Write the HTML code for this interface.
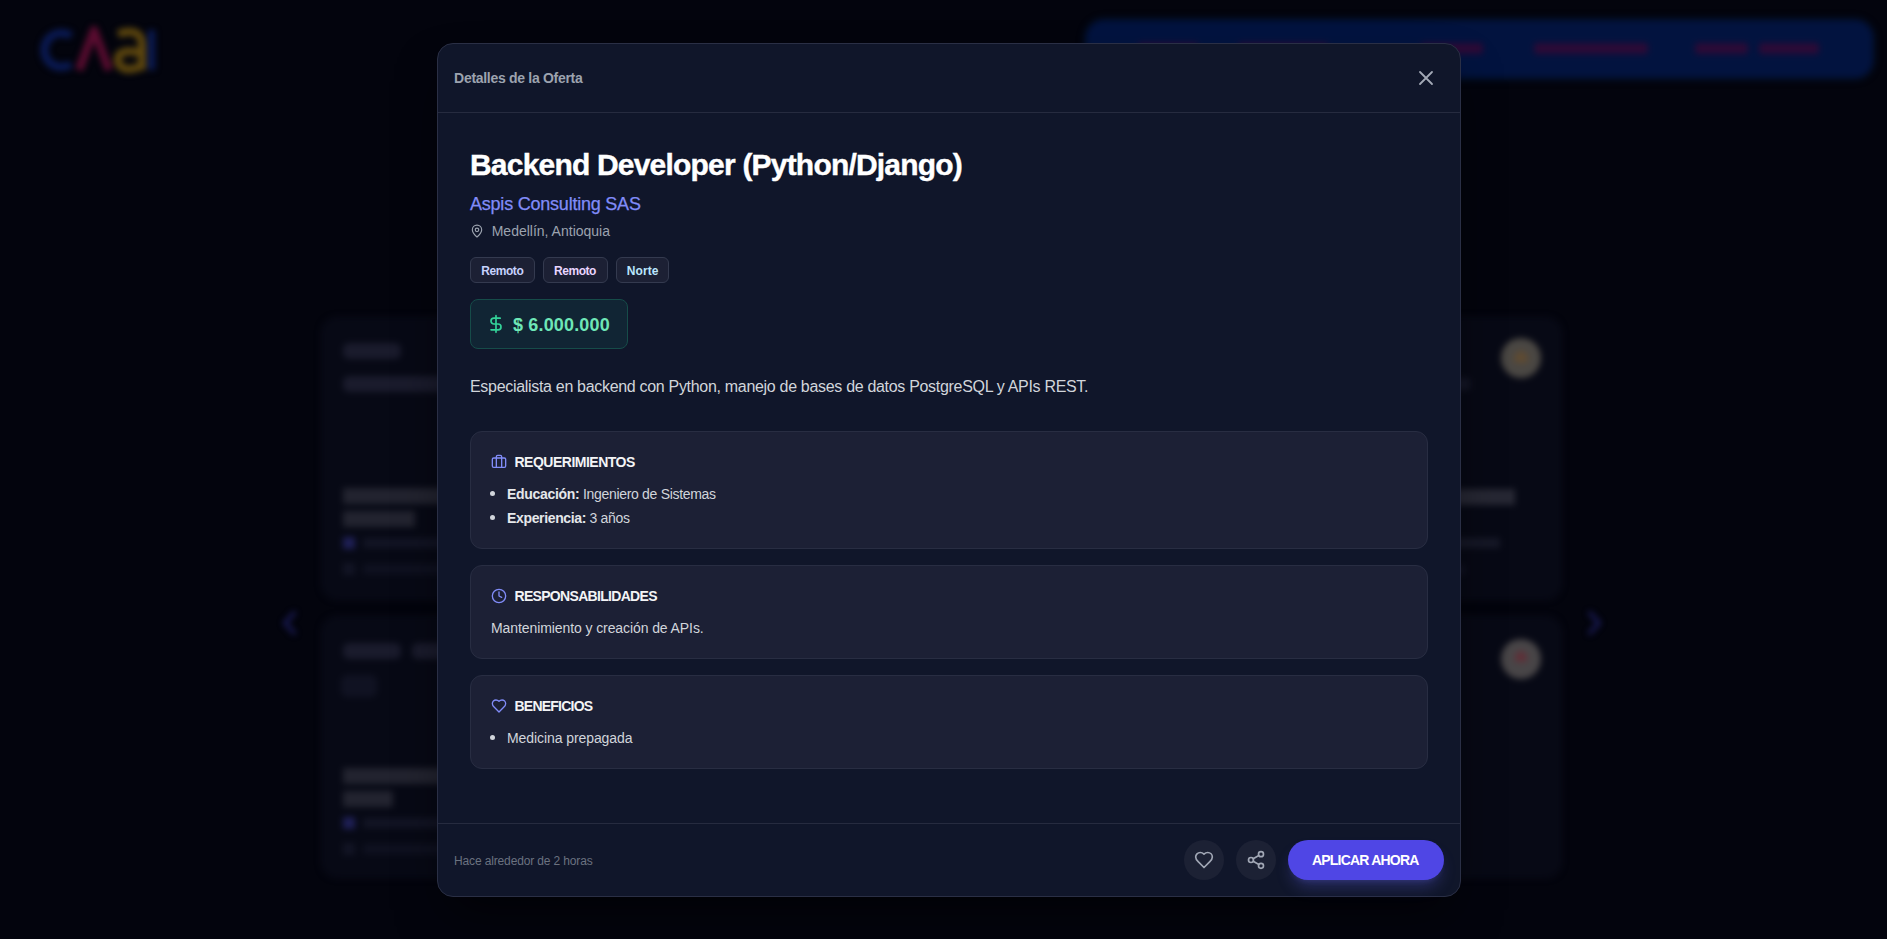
<!DOCTYPE html>
<html lang="es">
<head>
<meta charset="utf-8">
<title>Detalles de la Oferta</title>
<style>
*{margin:0;padding:0;box-sizing:border-box}
html,body{width:1887px;height:939px;overflow:hidden}
body{background:#03040d;font-family:"Liberation Sans",sans-serif;position:relative}
.a{position:absolute}
.t{position:absolute;white-space:nowrap;line-height:1}
.b{font-weight:bold}
#bg{position:absolute;left:0;top:0;width:1887px;height:939px;overflow:hidden}
#modal{position:absolute;left:437px;top:43px;width:1024px;height:854px;background:#10162a;border:1px solid #2a2f45;border-radius:16px;box-shadow:0 25px 50px -12px rgba(0,0,0,.6)}
.hr{position:absolute;height:1px;background:#262b3f}
.tag{position:absolute;top:257px;height:26px;border:1px solid #343a4f;background:#1c2034;border-radius:6px}
.card{position:absolute;left:470px;width:958px;background:#1c2035;border:1px solid #282d42;border-radius:12px}
.dot{position:absolute;width:5px;height:5px;border-radius:50%;background:#d1d5db}
.ic{position:absolute;fill:none;stroke-linecap:round;stroke-linejoin:round}
.circ{position:absolute;top:840px;width:40px;height:40px;border-radius:50%;background:#1c2134}
</style>
</head>
<body>
<div id="bg">
 <div class="a" style="left:0;top:0;width:1887px;height:939px;filter:blur(3px)">
  <!-- logo -->
  <svg class="a" style="left:30px;top:20px" width="140" height="62" viewBox="0 0 140 62">
   <path d="M41 16 A17 17 0 1 0 41 44" fill="none" stroke="#0a1a55" stroke-width="8" stroke-linecap="butt"/>
   <path d="M49 50 L64 10 L79 50" fill="none" stroke="#5a0c30" stroke-width="8" stroke-linejoin="round"/>
   <path d="M88 14 Q112 6 112 26 L112 50 M112 33 Q86 27 88 42 Q92 54 112 46" fill="none" stroke="#5e470e" stroke-width="8"/>
   <rect x="118" y="10" width="7" height="40" fill="#0a1a55"/>
  </svg>
  <!-- nav pill -->
  <div class="a" style="left:1086px;top:20px;width:787px;height:58px;border-radius:18px;background:#02133f;box-shadow:0 0 6px rgba(0,60,120,.35)"></div>
  <div class="a" style="left:1138px;top:43px;width:60px;height:12px;background:#2c0a36;height:11px;border-radius:3px"></div>
  <div class="a" style="left:1238px;top:43px;width:90px;height:12px;background:#2c0a36;height:11px;border-radius:3px"></div>
  <div class="a" style="left:1421px;top:43px;width:62px;height:12px;background:#2c0a36;height:11px;border-radius:3px"></div>
  <div class="a" style="left:1534px;top:43px;width:114px;height:12px;background:#2c0a36;height:11px;border-radius:3px"></div>
  <div class="a" style="left:1695px;top:43px;width:53px;height:12px;background:#2c0a36;height:11px;border-radius:3px"></div>
  <div class="a" style="left:1759px;top:43px;width:60px;height:12px;background:#2c0a36;height:11px;border-radius:3px"></div>
  <!-- cards left -->
  <div class="a" style="left:321px;top:317px;width:400px;height:283px;border-radius:16px;background:#070915;border:1px solid #0b0d1b"></div>
  <div class="a" style="left:343px;top:343px;width:58px;height:16px;border-radius:6px;background:#1a1b2c"></div>
  <div class="a" style="left:343px;top:376px;width:120px;height:16px;border-radius:6px;background:#1a1b2c"></div>
  <div class="a" style="left:343px;top:488px;width:120px;height:16px;background:#22232f"></div>
  <div class="a" style="left:343px;top:511px;width:72px;height:16px;background:#22232f"></div>
  <div class="a" style="left:343px;top:537px;width:12px;height:12px;background:#1e1f55"></div>
  <div class="a" style="left:363px;top:538px;width:90px;height:10px;background:#121424"></div>
  <div class="a" style="left:343px;top:563px;width:12px;height:12px;background:#121424"></div>
  <div class="a" style="left:363px;top:564px;width:90px;height:10px;background:#0f1120"></div>
  <div class="a" style="left:321px;top:616px;width:400px;height:262px;border-radius:16px;background:#070915;border:1px solid #0b0d1b"></div>
  <div class="a" style="left:343px;top:643px;width:58px;height:16px;border-radius:6px;background:#1a1b2c"></div>
  <div class="a" style="left:412px;top:643px;width:58px;height:16px;border-radius:6px;background:#1a1b2c"></div>
  <div class="a" style="left:341px;top:675px;width:36px;height:22px;border-radius:6px;background:#101222"></div>
  <div class="a" style="left:343px;top:768px;width:120px;height:16px;background:#22232f"></div>
  <div class="a" style="left:343px;top:791px;width:50px;height:16px;background:#22232f"></div>
  <div class="a" style="left:343px;top:817px;width:12px;height:12px;background:#1e1f55"></div>
  <div class="a" style="left:363px;top:818px;width:90px;height:10px;background:#121424"></div>
  <div class="a" style="left:343px;top:843px;width:12px;height:12px;background:#121424"></div>
  <div class="a" style="left:363px;top:844px;width:90px;height:10px;background:#0f1120"></div>
  <!-- cards right -->
  <div class="a" style="left:1160px;top:317px;width:402px;height:283px;border-radius:16px;background:#070915;border:1px solid #0b0d1b"></div>
  <div class="a" style="left:1501px;top:338px;width:40px;height:40px;border-radius:50%;background:#4a4743"></div>
  <div class="a" style="left:1514px;top:351px;width:14px;height:12px;border-radius:7px 7px 2px 2px;background:#5e4a32"></div>
  <div class="a" style="left:1440px;top:378px;width:30px;height:12px;background:#141626"></div>
  <div class="a" style="left:1440px;top:489px;width:75px;height:16px;background:#262733"></div>
  <div class="a" style="left:1440px;top:538px;width:60px;height:10px;background:#161827"></div>
  <div class="a" style="left:1440px;top:565px;width:25px;height:10px;background:#101222"></div>
  <div class="a" style="left:1160px;top:616px;width:402px;height:262px;border-radius:16px;background:#070915;border:1px solid #0b0d1b"></div>
  <div class="a" style="left:1501px;top:639px;width:40px;height:40px;border-radius:50%;background:#484547"></div>
  <div class="a" style="left:1515px;top:651px;width:12px;height:11px;border-radius:6px 6px 2px 2px;background:#5e3038"></div>
  <!-- arrows -->
  <svg class="a" style="left:280px;top:610px" width="20" height="26" viewBox="0 0 20 26"><path d="M15 2 5 13l10 11" fill="none" stroke="#1f2068" stroke-width="3.2"/></svg>
  <svg class="a" style="left:1584px;top:610px" width="20" height="26" viewBox="0 0 20 26"><path d="M5 2l10 11-10 11" fill="none" stroke="#1f2068" stroke-width="3.2"/></svg>
 </div>
</div>

<div id="modal"></div>
<!-- header -->
<div class="t b" style="left:454.1px;top:71px;font-size:14px;letter-spacing:-0.3px;color:#9ca3af">Detalles de la Oferta</div>
<svg class="ic" style="left:1414px;top:66px" width="24" height="24" viewBox="0 0 24 24" stroke="#a3a9b6" stroke-width="1.8"><path d="M18 6 6 18M6 6l12 12"/></svg>
<div class="hr" style="left:438px;top:112px;width:1022px"></div>

<!-- title -->
<div class="t b" style="left:470px;top:149.7px;font-size:30px;letter-spacing:-0.8px;color:#ffffff;-webkit-text-stroke:0.4px #ffffff">Backend Developer (Python/Django)</div>
<div class="t" style="left:470px;top:195.1px;font-size:18px;letter-spacing:-0.22px;color:#818cf8;-webkit-text-stroke:0.25px #818cf8">Aspis Consulting SAS</div>
<svg class="ic" style="left:470px;top:224px" width="14" height="14" viewBox="0 0 24 24" stroke="#9ca3af" stroke-width="2"><path d="M20 10c0 4.993-5.539 10.193-7.399 11.799a1 1 0 0 1-1.202 0C9.539 20.193 4 14.993 4 10a8 8 0 0 1 16 0"/><circle cx="12" cy="10" r="3"/></svg>
<div class="t" style="left:491.7px;top:224px;font-size:14px;color:#9ca3af">Medellín, Antioquia</div>

<!-- tags -->
<div class="tag" style="left:470px;width:65px"></div>
<div class="tag" style="left:543px;width:65px"></div>
<div class="tag" style="left:616px;width:53px"></div>
<div class="t b" style="left:481.3px;top:264.5px;font-size:12px;letter-spacing:-0.45px;color:#c7d2fe">Remoto</div>
<div class="t b" style="left:554px;top:264.5px;font-size:12px;letter-spacing:-0.45px;color:#e9d5ff">Remoto</div>
<div class="t b" style="left:626.8px;top:264.5px;font-size:12px;letter-spacing:0.1px;color:#bae6fd">Norte</div>

<!-- salary -->
<div class="a" style="left:470px;top:299px;width:158px;height:50px;border:1px solid #164c49;background:#112534;border-radius:8px"></div>
<svg class="ic" style="left:486px;top:314px" width="20" height="20" viewBox="0 0 24 24" stroke="#34d399" stroke-width="2"><path d="M12 2v20M17 5H9.5a3.5 3.5 0 0 0 0 7h5a3.5 3.5 0 0 1 0 7H6"/></svg>
<div class="t b" style="left:513px;top:316.3px;font-size:18px;letter-spacing:0.16px;color:#6ee7b7">$ 6.000.000</div>

<!-- description -->
<div class="t" style="left:470px;top:378.5px;font-size:16px;letter-spacing:-0.31px;color:#d1d5db">Especialista en backend con Python, manejo de bases de datos PostgreSQL y APIs REST.</div>

<!-- cards -->
<div class="card" style="top:431px;height:118px"></div>
<div class="card" style="top:565px;height:94px"></div>
<div class="card" style="top:675px;height:94px"></div>

<svg class="ic" style="left:491px;top:454px" width="16" height="16" viewBox="0 0 24 24" stroke="#818cf8" stroke-width="2"><path d="M16 20V4a2 2 0 0 0-2-2h-4a2 2 0 0 0-2 2v16"/><rect width="20" height="14" x="2" y="6" rx="2"/></svg>
<div class="t b" style="left:514.5px;top:455px;font-size:14px;letter-spacing:-0.5px;color:#f3f4f6">REQUERIMIENTOS</div>
<div class="dot" style="left:490px;top:491px"></div>
<div class="t" style="left:507px;top:487px;font-size:14px;letter-spacing:-0.31px;color:#d1d5db"><b style="color:#e5e7eb">Educación:</b> Ingeniero de Sistemas</div>
<div class="dot" style="left:490px;top:515px"></div>
<div class="t" style="left:507px;top:511px;font-size:14px;letter-spacing:-0.35px;color:#d1d5db"><b style="color:#e5e7eb">Experiencia:</b> 3 años</div>

<svg class="ic" style="left:491px;top:588px" width="16" height="16" viewBox="0 0 24 24" stroke="#818cf8" stroke-width="2"><circle cx="12" cy="12" r="10"/><path d="M12 6v6l4 2"/></svg>
<div class="t b" style="left:514.5px;top:589px;font-size:14px;letter-spacing:-0.69px;color:#f3f4f6">RESPONSABILIDADES</div>
<div class="t" style="left:491px;top:621px;font-size:14px;letter-spacing:-0.09px;color:#d1d5db">Mantenimiento y creación de APIs.</div>

<svg class="ic" style="left:491px;top:698px" width="16" height="16" viewBox="0 0 24 24" stroke="#818cf8" stroke-width="2"><path d="M19 14c1.49-1.46 3-3.21 3-5.5A5.5 5.5 0 0 0 16.5 3c-1.76 0-3 .5-4.5 2-1.5-1.5-2.74-2-4.5-2A5.5 5.5 0 0 0 2 8.5c0 2.3 1.5 4.05 3 5.5l7 7Z"/></svg>
<div class="t b" style="left:514.5px;top:699px;font-size:14px;letter-spacing:-0.77px;color:#f3f4f6">BENEFICIOS</div>
<div class="dot" style="left:490px;top:735px"></div>
<div class="t" style="left:507px;top:731px;font-size:14px;letter-spacing:-0.08px;color:#d1d5db">Medicina prepagada</div>

<!-- footer -->
<div class="hr" style="left:438px;top:823px;width:1022px"></div>
<div class="t" style="left:454px;top:854.8px;font-size:12px;letter-spacing:-0.14px;color:#6b7280">Hace alrededor de 2 horas</div>
<div class="circ" style="left:1184px"></div>
<div class="circ" style="left:1236px"></div>
<svg class="ic" style="left:1194px;top:850px" width="20" height="20" viewBox="0 0 24 24" stroke="#a1a7b5" stroke-width="2"><path d="M19 14c1.49-1.46 3-3.21 3-5.5A5.5 5.5 0 0 0 16.5 3c-1.76 0-3 .5-4.5 2-1.5-1.5-2.74-2-4.5-2A5.5 5.5 0 0 0 2 8.5c0 2.3 1.5 4.05 3 5.5l7 7Z"/></svg>
<svg class="ic" style="left:1246px;top:850px" width="20" height="20" viewBox="0 0 24 24" stroke="#a1a7b5" stroke-width="2"><circle cx="18" cy="5" r="3"/><circle cx="6" cy="12" r="3"/><circle cx="18" cy="19" r="3"/><path d="m8.59 13.51 6.83 3.98M15.41 6.51l-6.82 3.98"/></svg>
<div class="a" style="left:1288px;top:840px;width:156px;height:40px;border-radius:20px;background:#4f46e5;box-shadow:0 10px 15px -3px rgba(99,102,241,.28),0 4px 6px -4px rgba(99,102,241,.28)"></div>
<div class="t b" style="left:1312px;top:853px;font-size:14px;letter-spacing:-0.8px;color:#ffffff">APLICAR AHORA</div>
</body>
</html>
